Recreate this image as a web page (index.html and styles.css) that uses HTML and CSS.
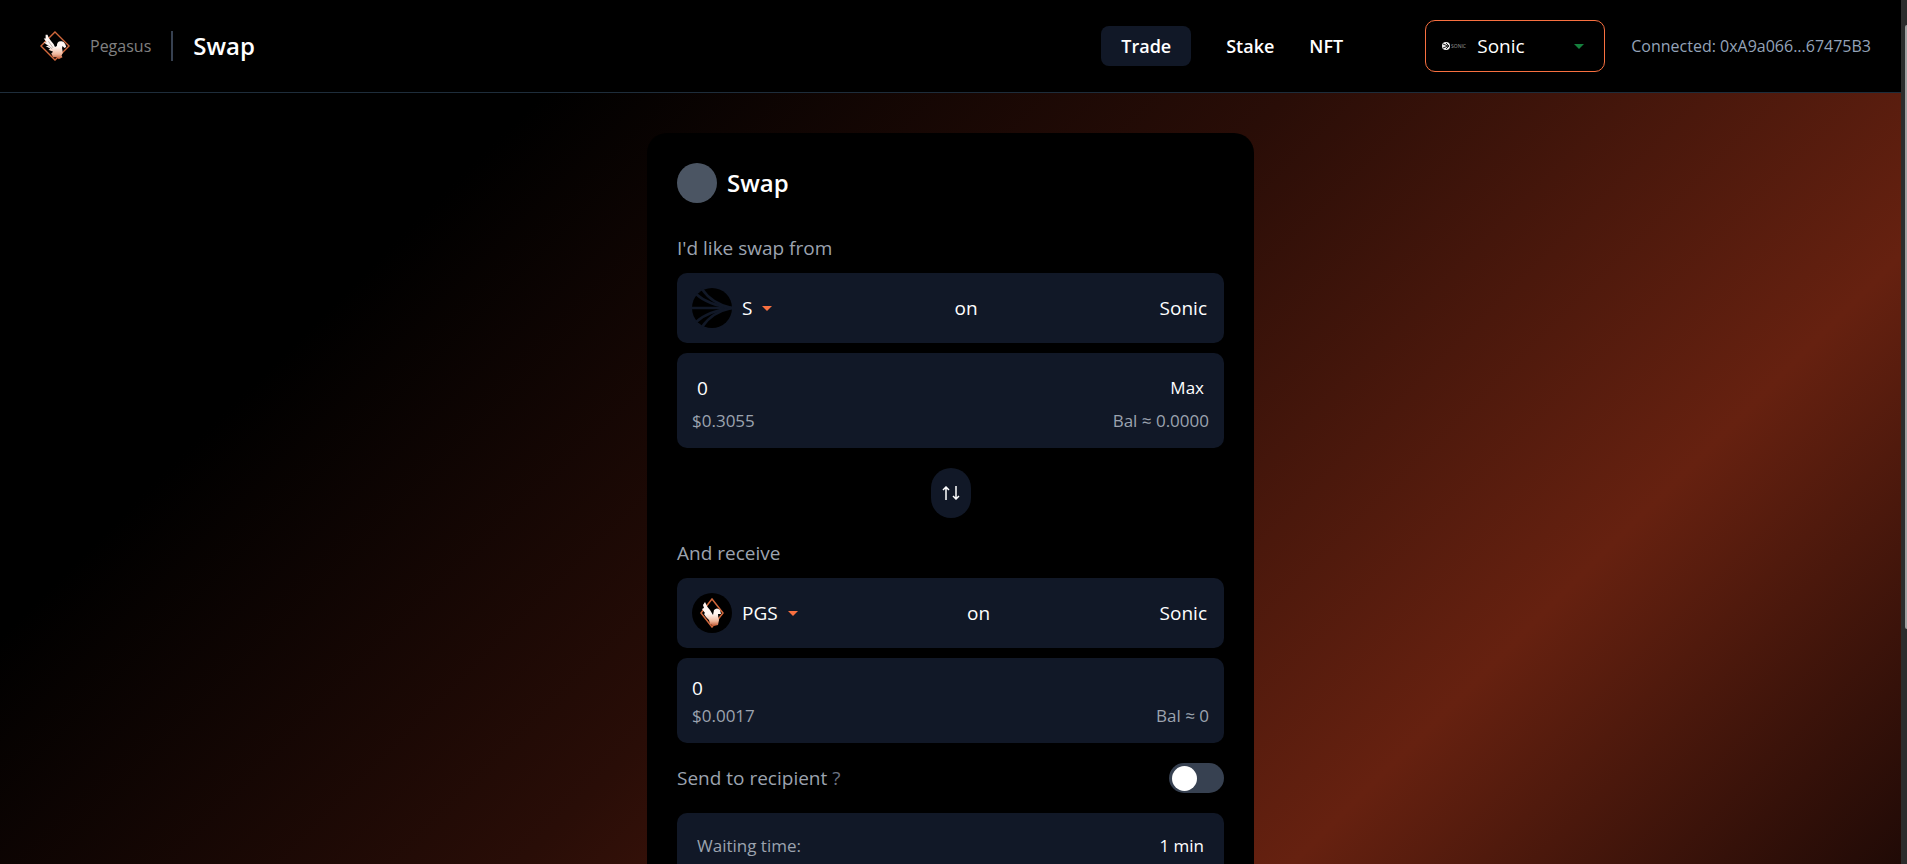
FILE: index.html
```
<!DOCTYPE html>
<html lang="en">
  <head>
    <title>Pegasus | Swap</title>
    <meta charset="utf-8" />
    <meta name="viewport" content="width=device-width, initial-scale=1" />
    <link rel="stylesheet" href="styles.css">
  </head>
  <body>
    <!-- shared icons -->
    <svg width="0" height="0" class="defs" aria-hidden="true">
      <defs>
        <linearGradient id="wing" x1="0" y1="0" x2="0" y2="1">
          <stop offset="0.5" stop-color="#fff6f2" />
          <stop offset="0.8" stop-color="#f0b79c" />
          <stop offset="1" stop-color="#c0552f" />
        </linearGradient>
      </defs>
      <symbol id="pegasus" viewBox="0 0 32 32">
        <path d="M16 1 L31 16 L16 31 L1 16 Z" fill="none" stroke="#d2683c" stroke-width="1.5" />
        <path d="M6 4 L8 4 Q9 8 12 11 Q15 14 16 17 L18 16 Q18 11 22 11 Q25 10 27 14 L28 17 L26 18 L24 16 Q23 18 24 21 Q25 24 23 26 L24 28 L20 30 L18 28 L14 28 L12 24 L14 22 L9 20 L11 19 L6 16 L9 16 L4 12 L7 12 L4 8 L6 8 Z" fill="url(#wing)" />
        <path d="M9 11 L14 18 M8 15 L13 19" fill="none" stroke="#6b5a55" stroke-width="0.5" />
      </symbol>
      <symbol id="caret" viewBox="0 0 10 5">
        <path d="M0 0 H10 L5 5 Z" fill="currentColor" />
      </symbol>
    </svg>

    <div class="page">
      <header class="topbar">
        <a href="#" class="brand">
          <svg class="brand-logo"><use href="#pegasus" /></svg>
          <span>Pegasus</span>
        </a>
        <h1 class="page-title">Swap</h1>
        <nav class="menu">
          <a href="#" class="menu-link active">Trade</a>
          <a href="#" class="menu-link">Stake</a>
          <a href="#" class="menu-link">NFT</a>
        </nav>
        <button class="network">
          <svg class="sonic-mark" viewBox="0 0 26 10" aria-hidden="true">
            <circle cx="5" cy="5" r="4" fill="#eee" />
            <path d="M2 3 L7 5 L2 7 M5 2 L8 5 L5 8" fill="none" stroke="#222" stroke-width="1" />
            <text x="10" y="7" class="sonic-word">SONIC</text>
          </svg>
          <span>Sonic</span>
          <svg class="caret green"><use href="#caret" /></svg>
        </button>
        <div class="account">Connected: 0xA9a066...67475B3</div>
      </header>

      <main>
        <section class="card">
          <div class="card-head">
            <div class="avatar"></div>
            <h2>Swap</h2>
          </div>

          <p class="label">I'd like swap from</p>
          <div class="box token-row">
            <button class="token">
              <svg class="token-icon" viewBox="0 0 40 40" aria-hidden="true">
                <circle cx="20" cy="20" r="20" fill="#000" />
                <g fill="none" stroke="#111827" stroke-width="2.5">
                  <path d="M0 20 H40" />
                  <path d="M4 6 Q16 17 40 20 Q16 23 4 34" />
                  <path d="M10 1 Q20 16 40 20 Q20 24 10 39" />
                </g>
              </svg>
              <span>S</span>
              <svg class="caret"><use href="#caret" /></svg>
            </button>
            <span class="on">on</span>
            <span class="chain">Sonic</span>
          </div>
          <div class="box amount">
            <div class="amount-row">
              <input type="text" class="amount-input" value="0" aria-label="Amount to swap" />
              <button class="max">Max</button>
            </div>
            <div class="amount-row muted">
              <span>$0.3055</span>
              <span>Bal ≈ 0.0000</span>
            </div>
          </div>

          <button class="flip" aria-label="Switch tokens">
            <svg viewBox="0 0 18 14" aria-hidden="true">
              <path d="M4 14 V1 M1 4 L4 1 L7 4 M14 0 V13 M11 10 L14 13 L17 10" />
            </svg>
          </button>

          <p class="label">And receive</p>
          <div class="box token-row">
            <button class="token">
              <span class="token-icon round">
                <svg viewBox="0 0 24 30" aria-hidden="true">
                  <path d="M12 1 L23 15 L12 29 L1 15 Z" fill="none" stroke="#d2683c" stroke-width="1.5" />
                  <path d="M5 4 Q7 9 10 12 L13 17 L14 12 Q17 9 20 12 L21 16 L18 16 Q18 19 19 22 L18 27 L14 28 L10 26 L9 22 L6 19 L4 16 L5 15 L2 11 L4 10 L3 7 Z" fill="url(#wing)" />
                </svg>
              </span>
              <span>PGS</span>
              <svg class="caret"><use href="#caret" /></svg>
            </button>
            <span class="on">on</span>
            <span class="chain">Sonic</span>
          </div>
          <div class="box receive">
            <div class="receive-value">0</div>
            <div class="amount-row muted">
              <span>$0.0017</span>
              <span>Bal ≈ 0</span>
            </div>
          </div>

          <div class="recipient">
            <label for="recipient">Send to recipient <span class="hint">?</span></label>
            <input type="checkbox" id="recipient" class="switch" />
          </div>

          <div class="box details">
            <span>Waiting time:</span>
            <span class="value">1 min</span>
          </div>
        </section>
      </main>
    </div>
    <div class="scrollbar"><div class="thumb"></div></div>
  </body>
</html>
```
FILE: styles.css
```
* {
  box-sizing: border-box;
}
body {
  margin: 0;
  display: flex;
  height: 100vh;
  overflow: hidden;
  background: #000;
  color: #fff;
  font-family: "Open Sans", "Noto Sans", sans-serif;
  font-size: 19px;
  line-height: 30px;
}
h1, h2, p {
  margin: 0;
}
a {
  color: inherit;
  text-decoration: none;
}
button, input {
  font: inherit;
  color: inherit;
  border: 0;
  padding: 0;
  background: none;
}
button {
  cursor: pointer;
}
.defs {
  position: absolute;
}
.page {
  flex: 1;
  overflow: hidden;
  background: linear-gradient(135deg, #000 23%, #290d07 50%, #662110 78%, #200a06 100%);
}

/* header */
.topbar {
  display: flex;
  align-items: center;
  height: 93px;
  padding: 0 30px 0 40px;
  background: #000;
  border-bottom: 1px solid #1e2d3b;
}
.brand {
  display: flex;
  align-items: center;
  gap: 20px;
  padding-right: 20px;
  border-right: 2px solid #374151;
  color: #808080;
  font-size: 16px;
}
.brand-logo {
  width: 30px;
  height: 30px;
}
.page-title {
  margin-left: 20px;
  font-size: 24px;
  font-weight: 600;
}
.menu {
  display: flex;
  align-items: center;
  gap: 35px;
  margin-left: auto;
  margin-right: 82px;
  font-size: 18px;
  font-weight: 600;
}
.menu-link.active {
  padding: 5px 20px;
  border-radius: 8px;
  background: #111827;
}
.network {
  display: flex;
  align-items: center;
  width: 180px;
  height: 52px;
  margin-right: 26px;
  padding: 0 20px 0 15px;
  gap: 10px;
  border: 1px solid #f97040;
  border-radius: 10px;
}
.sonic-mark {
  width: 26px;
  height: 10px;
}
.sonic-word {
  font-size: 5px;
  fill: #999;
}
.caret {
  width: 10px;
  height: 5px;
  color: #f97040;
}
.caret.green {
  margin-left: auto;
  color: #15803d;
}
.account {
  color: #94a3b8;
  font-size: 16px;
}

/* swap card */
.card {
  width: 607px;
  margin: 40px auto 0;
  padding: 30px;
  border-radius: 20px;
  background: #000;
}
.card-head {
  display: flex;
  align-items: center;
  gap: 10px;
  margin-bottom: 30px;
}
.card-head h2 {
  font-size: 24px;
  font-weight: 600;
}
.avatar {
  width: 40px;
  height: 40px;
  border-radius: 50%;
  background: #4b5563;
}
.label {
  margin-bottom: 10px;
  color: #9ca3af;
}
.box {
  border-radius: 10px;
  background: #111827;
  padding: 15px;
}
.token-row {
  display: flex;
  align-items: center;
  justify-content: space-between;
  height: 70px;
  margin-bottom: 10px;
}
.token {
  display: flex;
  align-items: center;
  gap: 10px;
}
.token-icon {
  width: 40px;
  height: 40px;
}
.token-icon.round {
  display: flex;
  align-items: center;
  justify-content: center;
  border-radius: 50%;
  background: #000;
}
.round svg {
  width: 24px;
  height: 30px;
}
.chain {
  padding-right: 2px;
}
.amount {
  height: 95px;
}
.amount-row {
  display: flex;
  justify-content: space-between;
  align-items: center;
}
.amount-input {
  width: 50%;
  height: 40px;
  padding: 0 5px;
}
.max {
  padding: 0 5px;
  font-size: 17px;
}
.muted {
  color: #9ca3af;
  font-size: 17px;
  line-height: 25px;
}
.flip {
  display: flex;
  align-items: center;
  justify-content: center;
  width: 40px;
  height: 50px;
  margin: 20px auto;
  border-radius: 20px;
  background: #111827;
}
.flip svg {
  width: 18px;
  height: 14px;
  fill: none;
  stroke: #fff;
  stroke-width: 1.5;
}
.receive {
  height: 85px;
}
.receive-value {
  height: 30px;
}
.recipient {
  display: flex;
  align-items: center;
  justify-content: space-between;
  margin: 20px 0;
  color: #9ca3af;
}
.hint {
  color: #6b7280;
}
.switch {
  appearance: none;
  display: flex;
  align-items: center;
  width: 55px;
  height: 30px;
  margin: 0;
  padding: 3px;
  border-radius: 15px;
  background: #374151;
}
.switch::before {
  content: "";
  width: 25px;
  height: 25px;
  border-radius: 50%;
  background: #fff;
}
.switch:checked {
  justify-content: flex-end;
}
.details {
  display: flex;
  justify-content: space-between;
  padding: 20px;
  color: #9ca3af;
  font-size: 17px;
  line-height: 25px;
}
.details .value {
  color: #fff;
}

/* scroll track on the window edge */
.scrollbar {
  width: 6px;
  padding: 25px 0 0 4px;
  background: #2c2c2c;
}
.thumb {
  height: 72%;
  border-radius: 2px 0 0 2px;
  background: #9f9f9f;
}
```
